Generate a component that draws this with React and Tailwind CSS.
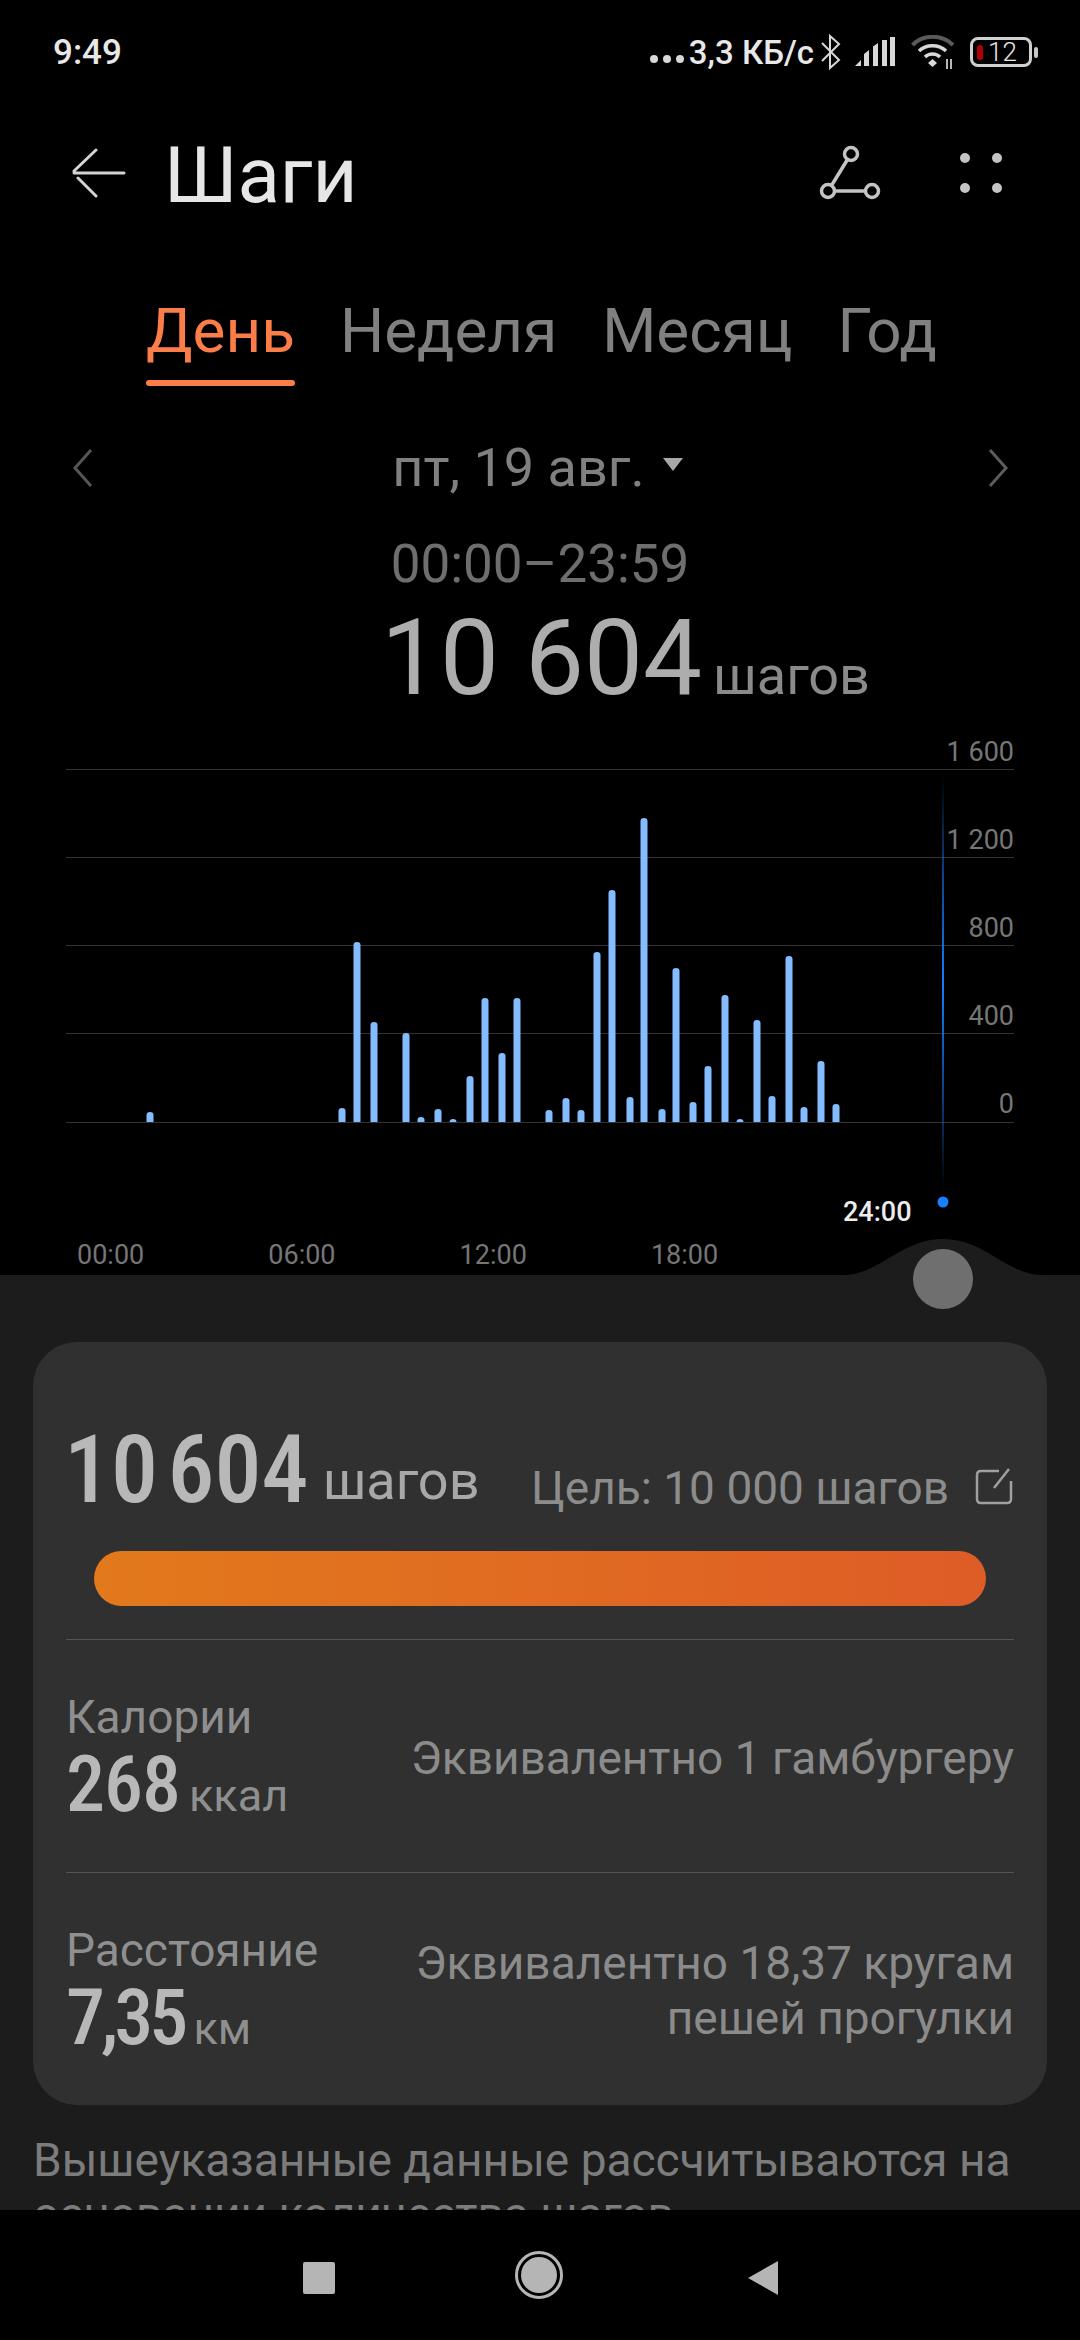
const bars = [
  [150, 1112], [342, 1108], [357, 942], [374, 1022], [406, 1033], [421, 1117], [438, 1109], [453, 1119],
  [470, 1076], [485, 998], [502, 1053], [517, 998], [549, 1110], [566, 1098], [581, 1110], [597, 952],
  [612, 890], [630, 1097], [644, 818], [662, 1109], [676, 968], [693, 1102], [708, 1066], [725, 995],
  [740, 1119], [757, 1020], [772, 1096], [789, 956], [804, 1107], [821, 1061], [836, 1104],
];
const gridLines = [769, 857, 945, 1033, 1122];
const yLabels = ["1 600", "1 200", "800", "400", "0"];
const xLabels = ["00:00", "06:00", "12:00", "18:00"];

function StatusBar() {
  return (
    <div className="h-[104px] shrink-0 flex items-center justify-between pl-[53px] pr-[42px] text-[#e8e8e8]">
      <span className="text-[35px] font-medium leading-none">9:49</span>
      <div className="flex items-center">
        <div className="flex gap-[5px] mt-[14px] mr-[5px]">
          <span className="w-[8px] h-[8px] rounded-full bg-[#d8d8d8]" />
          <span className="w-[8px] h-[8px] rounded-full bg-[#d8d8d8]" />
          <span className="w-[8px] h-[8px] rounded-full bg-[#d8d8d8]" />
        </div>
        <span className="text-[33px] font-medium leading-none">3,3 КБ/с</span>
        <svg width="22" height="36" viewBox="0 0 22 36" fill="none" stroke="#d8d8d8" strokeWidth="2" className="ml-[6px]">
          <path d="M2 9 19 26 10 34V2l9 8L2 27" />
        </svg>
        <svg width="40" height="30" viewBox="0 0 40 30" fill="#d8d8d8" className="ml-[13px]">
          <path d="M0 29 6 23V29ZM9 29V17L14 13V29ZM18 29V9.5L23 6V29ZM27 29V3H32V29ZM35 29V0H40V29Z" />
        </svg>
        <svg width="44" height="34" viewBox="0 0 44 34" fill="none" className="ml-[16px]">
          <path d="M1.5 10C12 -1 31 -1 42 10" stroke="#5a5a5a" strokeWidth="4" />
          <path d="M8 16C15 9 28 9 35 16" stroke="#d8d8d8" strokeWidth="3.5" />
          <path d="M14 22C18 18 25 18 29 22" stroke="#d8d8d8" strokeWidth="3.5" />
          <path d="M21.5 24 26 28 21.5 32 17 28Z" fill="#d8d8d8" />
          <path d="M36 24V34M40 24V34" stroke="#b8b8b8" strokeWidth="2" />
        </svg>
        <div className="ml-[15px] flex items-center">
          <div className="w-[62px] h-[30px] border-[3px] border-[#d0d0d0] rounded-[8px] flex items-center pl-[4px]">
            <span className="w-[6px] h-[15px] rounded-[3px] bg-[#b30000]" />
            <span className="ml-[5px] text-[26px] font-light leading-none text-[#e8e8e8]">12</span>
          </div>
          <span className="ml-[2px] w-[4px] h-[11px] rounded-[2px] bg-[#c8c8c8]" />
        </div>
      </div>
    </div>
  );
}

function Header() {
  return (
    <div className="h-[138px] shrink-0 flex items-center pl-[70px] pr-[78px]">
      <svg width="56" height="50" viewBox="0 0 56 50" fill="none" stroke="#d4d4d4" strokeWidth="3" strokeLinecap="round">
        <path d="M26 2 4 23M8 30 26 48M4 25H54" />
      </svg>
      <span className="ml-[38px] mt-[5px] text-[78px] leading-none text-[#e6e6e6]">Шаги</span>
      <div className="ml-auto flex items-center">
        <svg width="62" height="56" viewBox="0 0 62 56" fill="none" stroke="#c4c4c4" strokeWidth="3.5">
          <circle cx="32" cy="9" r="6.5" />
          <circle cx="9" cy="46" r="6.5" />
          <circle cx="53" cy="46" r="6.5" />
          <path d="M28.5 14.5 12.5 40.5M15.5 46H46.5" />
        </svg>
        <div className="ml-[79px] grid grid-cols-2 gap-x-[22px] gap-y-[20px]">
          <span className="w-[10px] h-[10px] rounded-full bg-[#c4c4c4]" />
          <span className="w-[10px] h-[10px] rounded-full bg-[#c4c4c4]" />
          <span className="w-[10px] h-[10px] rounded-full bg-[#c4c4c4]" />
          <span className="w-[10px] h-[10px] rounded-full bg-[#c4c4c4]" />
        </div>
      </div>
    </div>
  );
}

function Tabs() {
  return (
    <div className="h-[144px] shrink-0 flex items-start gap-[45px] pl-[146px] pt-[54px] text-[62px] leading-[70px] text-[#808080]">
      <div className="flex flex-col">
        <span className="text-[#fb7d48]">День</span>
        <span className="h-[6px] mt-[14px] rounded-full bg-[#fb7d48]" />
      </div>
      <span>Неделя</span>
      <span>Месяц</span>
      <span>Год</span>
    </div>
  );
}

function Summary() {
  return (
    <div className="shrink-0">
      <div className="h-[120px] flex items-center pl-[73px] pr-[72px] pt-[44px]">
        <svg width="20" height="40" viewBox="0 0 20 40" fill="none" stroke="#555" strokeWidth="3">
          <path d="M18 2 2 20 18 38" />
        </svg>
        <div className="flex-1 flex items-center justify-center pr-[6px]">
          <span className="text-[54px] leading-none text-[#808080]">пт, 19 авг.</span>
          <svg width="20" height="14" viewBox="0 0 20 14" fill="#a8a8a8" className="ml-[18px] mb-[8px]">
            <path d="M0 1H20L10 14Z" />
          </svg>
        </div>
        <svg width="20" height="40" viewBox="0 0 20 40" fill="none" stroke="#5c5c5c" strokeWidth="3">
          <path d="M2 2 18 20 2 38" />
        </svg>
      </div>
      <div className="h-[74px] mt-[21px] flex items-center justify-center text-[53px] leading-none text-[#6e6e6e]">
        00:00–23:59
      </div>
      <div className="h-[139px] flex items-baseline pl-[381px]">
        <span className="text-[105px] leading-[116px] text-[#adadad]">10 604</span>
        <span className="ml-[11px] text-[54px] text-[#8a8a8a]">шагов</span>
      </div>
    </div>
  );
}

function Chart() {
  return (
    <div className="relative h-[535px] shrink-0">
      <svg width="1080" height="535" viewBox="0 740 1080 535" className="absolute inset-0">
        <defs>
          <linearGradient id="cursor" x1="0" y1="0" x2="0" y2="1">
            <stop offset="0" stopColor="#1a7cff" stopOpacity="0" />
            <stop offset="0.25" stopColor="#1a7cff" stopOpacity="0.55" />
            <stop offset="0.5" stopColor="#1a7cff" />
            <stop offset="0.75" stopColor="#1a7cff" stopOpacity="0.55" />
            <stop offset="1" stopColor="#1a7cff" stopOpacity="0" />
          </linearGradient>
        </defs>
        {gridLines.map((y) => (
          <rect key={y} x="66" y={y} width="948" height="1" fill="#333" />
        ))}
        {bars.map(([x, top]) => (
          <path
            key={x}
            d={`M${x - 3.5} 1122V${top + 3}Q${x - 3.5} ${top} ${x} ${top}Q${x + 3.5} ${top} ${x + 3.5} ${top + 3}V1122Z`}
            fill="#84bdff"
          />
        ))}
        <rect x="942" y="775" width="2" height="415" fill="url(#cursor)" />
        <circle cx="943" cy="1202" r="5.5" fill="#1a7cff" />
      </svg>
      <div className="absolute right-[66px] top-[-6px] flex flex-col items-end text-[27px] text-[#767676]">
        {yLabels.map((label) => (
          <span key={label} className="h-[88px] leading-[36px]">{label}</span>
        ))}
      </div>
      <span className="absolute left-[843px] top-[454px] text-[27px] leading-[36px] font-medium text-[#ececec]">24:00</span>
      <div className="absolute left-[15px] bottom-[2px] flex text-[27px] leading-[36px] text-[#767676]">
        {xLabels.map((label) => (
          <span key={label} className="w-[191.3px] text-center">{label}</span>
        ))}
      </div>
    </div>
  );
}

function CardRow({ title, value, unit, tight, children }) {
  return (
    <div className="mx-[33px] flex items-center justify-between border-t border-[#545454] h-[233px]">
      <div className="flex flex-col pt-[7px]">
        <span className="text-[46px] leading-[56px] text-[#8f8f8f]">{title}</span>
        <div className="flex items-baseline">
          <span className={`text-[78px] leading-[80px] font-medium [font-stretch:75%] text-[#b8b8b8] ${tight ? "tracking-[-4px]" : "tracking-[-1px]"}`}>{value}</span>
          <span className="ml-[9px] text-[45px] text-[#8f8f8f]">{unit}</span>
        </div>
      </div>
      <div className="pt-[4px] text-right text-[46px] leading-[55px] text-[#8b8b8b]">{children}</div>
    </div>
  );
}

function Panel() {
  return (
    <div className="relative flex-1 min-h-0 bg-[#1c1c1c] pt-[67px]">
      <svg width="200" height="36" viewBox="843 1239 200 36" fill="#1c1c1c" className="absolute left-[843px] top-[-36px]">
        <path d="M843 1275C880 1275 900 1239 943 1239C986 1239 1006 1275 1043 1275Z" />
      </svg>
      <span className="absolute left-[913px] top-[-26px] w-[60px] h-[60px] rounded-full bg-[#6f6f6f]" />
      <div className="mx-[33px] h-[763px] rounded-[44px] bg-[#303030] flex flex-col">
        <div className="h-[209px] flex items-baseline pl-[31px] pr-[34px] pt-[78px]">
          <span className="text-[94px] leading-[100px] [word-spacing:-12px] font-medium [font-stretch:75%] text-[#b8b8b8]">10 604</span>
          <span className="ml-[14px] text-[54px] text-[#a8a8a8] translate-y-[-3px]">шагов</span>
          <span className="ml-auto text-[46px] text-[#8c8c8c] translate-y-[2px]">Цель: 10 000 шагов</span>
          <svg width="38" height="38" viewBox="0 0 38 38" fill="none" stroke="#a0a0a0" strokeWidth="2.5" className="ml-[26px] translate-y-[3px]">
            <path d="M24 4H6Q2 4 2 8V32Q2 36 6 36H32Q36 36 36 32V14M19 21 34 2" />
          </svg>
        </div>
        <div className="mx-[61px] h-[55px] rounded-full bg-gradient-to-r from-[#e2791b] to-[#de5c26]" />
        <div className="h-[33px]" />
        <CardRow title="Калории" value="268" unit="ккал">Эквивалентно 1 гамбургеру</CardRow>
        <CardRow title="Расстояние" value="7,35" unit="км" tight>
          Эквивалентно 18,37 кругам
          <br />
          пешей прогулки
        </CardRow>
      </div>
      <p className="mt-[28px] px-[33px] text-[46px] leading-[54px] text-[#7c7c7c]">
        Вышеуказанные данные рассчитываются на основании количества шагов.
      </p>
    </div>
  );
}

function NavBar() {
  return (
    <div className="relative z-10 h-[130px] shrink-0 bg-black">
      <div className="h-full flex items-center pl-[303px]">
        <span className="mt-[6px] w-[32px] h-[32px] rounded-[2px] bg-[#b5b5b5]" />
        <span className="ml-[180px] w-[48px] h-[48px] rounded-full border-[3px] border-[#b5b5b5] p-[3px]">
          <span className="block w-full h-full rounded-full bg-[#b5b5b5]" />
        </span>
        <svg width="32" height="36" viewBox="0 0 32 36" fill="#b5b5b5" className="mt-[6px] ml-[184px]">
          <path d="M31 1V35L1 18Z" />
        </svg>
      </div>
    </div>
  );
}

export default function App() {
  return (
    <div className="w-[1080px] h-[2340px] bg-black overflow-hidden flex flex-col font-[Roboto,sans-serif]">
      <StatusBar />
      <Header />
      <Tabs />
      <Summary />
      <Chart />
      <Panel />
      <NavBar />
    </div>
  );
}
